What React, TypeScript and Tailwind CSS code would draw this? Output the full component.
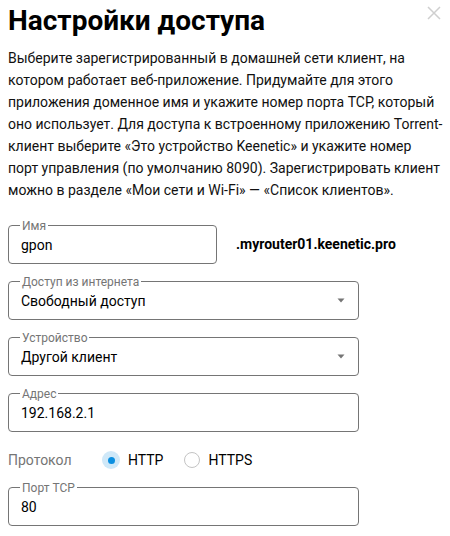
import React from "react";

const font = { fontFamily: "Roboto, 'Noto Sans', sans-serif" };

function Field({
  label,
  value,
  select,
  className,
}: {
  label: string;
  value: string;
  select?: boolean;
  className?: string;
}) {
  return (
    <div
      className={
        "relative h-[39px] rounded-[4px] border border-[#757575] flex items-center pl-[12px] pr-[12px] " +
        (className || "")
      }
    >
      <span className="absolute left-[11px] top-0 -translate-y-1/2 bg-white px-[2px] text-[12px] leading-[14px] text-[#757575]">
        {label}
      </span>
      <span className="flex-1 text-[14px] leading-[20px] text-black">{value}</span>
      {select && (
        <svg width="8" height="5" viewBox="0 0 8 5" className="mr-[1px]">
          <path d="M0.5 0.5 L7.5 0.5 L4 4.5 Z" fill="#757575" />
        </svg>
      )}
    </div>
  );
}

export default function App() {
  return (
    <div className="bg-white w-[450px] h-[536px] overflow-hidden px-[8px] pt-[3px]" style={font}>
      <div className="flex items-start justify-between">
        <h1 className="text-[28px] leading-[36px] font-bold text-black">Настройки доступа</h1>
        <svg width="14" height="14" viewBox="0 0 14 14" className="mt-[3px] mr-[1px]">
          <path d="M1 1 L13 13 M13 1 L1 13" stroke="#cfcfcf" strokeWidth="1.5" />
        </svg>
      </div>
      <p className="mt-[8px] text-[14px] leading-[22px] text-[#111] whitespace-nowrap">
        Выберите зарегистрированный в домашней сети клиент, на
        <br />
        котором работает веб-приложение. Придумайте для этого
        <br />
        приложения доменное имя и укажите номер порта TCP, который
        <br />
        оно использует. Для доступа к встроенному приложению Torrent-
        <br />
        клиент выберите «Это устройство Keenetic» и укажите номер
        <br />
        порт управления (по умолчанию 8090). Зарегистрировать клиент
        <br />
        можно в разделе «Мои сети и Wi-Fi» — «Список клиентов».
      </p>

      <div className="mt-[24px] flex items-center">
        <Field label="Имя" value="gpon" className="w-[209px]" />
        <span className="ml-[19px] text-[14px] font-bold text-black">.myrouter01.keenetic.pro</span>
      </div>

      <div className="w-[351px] flex flex-col gap-[17px] mt-[17px]">
        <Field label="Доступ из интернета" value="Свободный доступ" select />
        <Field label="Устройство" value="Другой клиент" select />
        <Field label="Адрес" value="192.168.2.1" />
      </div>

      <div className="mt-[15px] h-[26px] flex items-center text-[14px]">
        <span className="text-[#757575] w-[94px]">Протокол</span>
        <div className="flex items-center">
          <span className="w-[18px] h-[18px] rounded-full bg-[#cfe8f8] flex items-center justify-center">
            <span className="w-[7px] h-[7px] rounded-full bg-[#0b8fe0]" />
          </span>
          <span className="ml-[8px] text-black">HTTP</span>
        </div>
        <div className="flex items-center ml-[20px]">
          <span className="w-[18px] h-[18px] flex items-center justify-center">
            <span className="w-[16px] h-[16px] rounded-full border-[1.5px] border-[#c4c4c4]" />
          </span>
          <span className="ml-[7px] text-black">HTTPS</span>
        </div>
      </div>

      <div className="w-[351px] mt-[14px]">
        <Field label="Порт TCP" value="80" />
      </div>
    </div>
  );
}
